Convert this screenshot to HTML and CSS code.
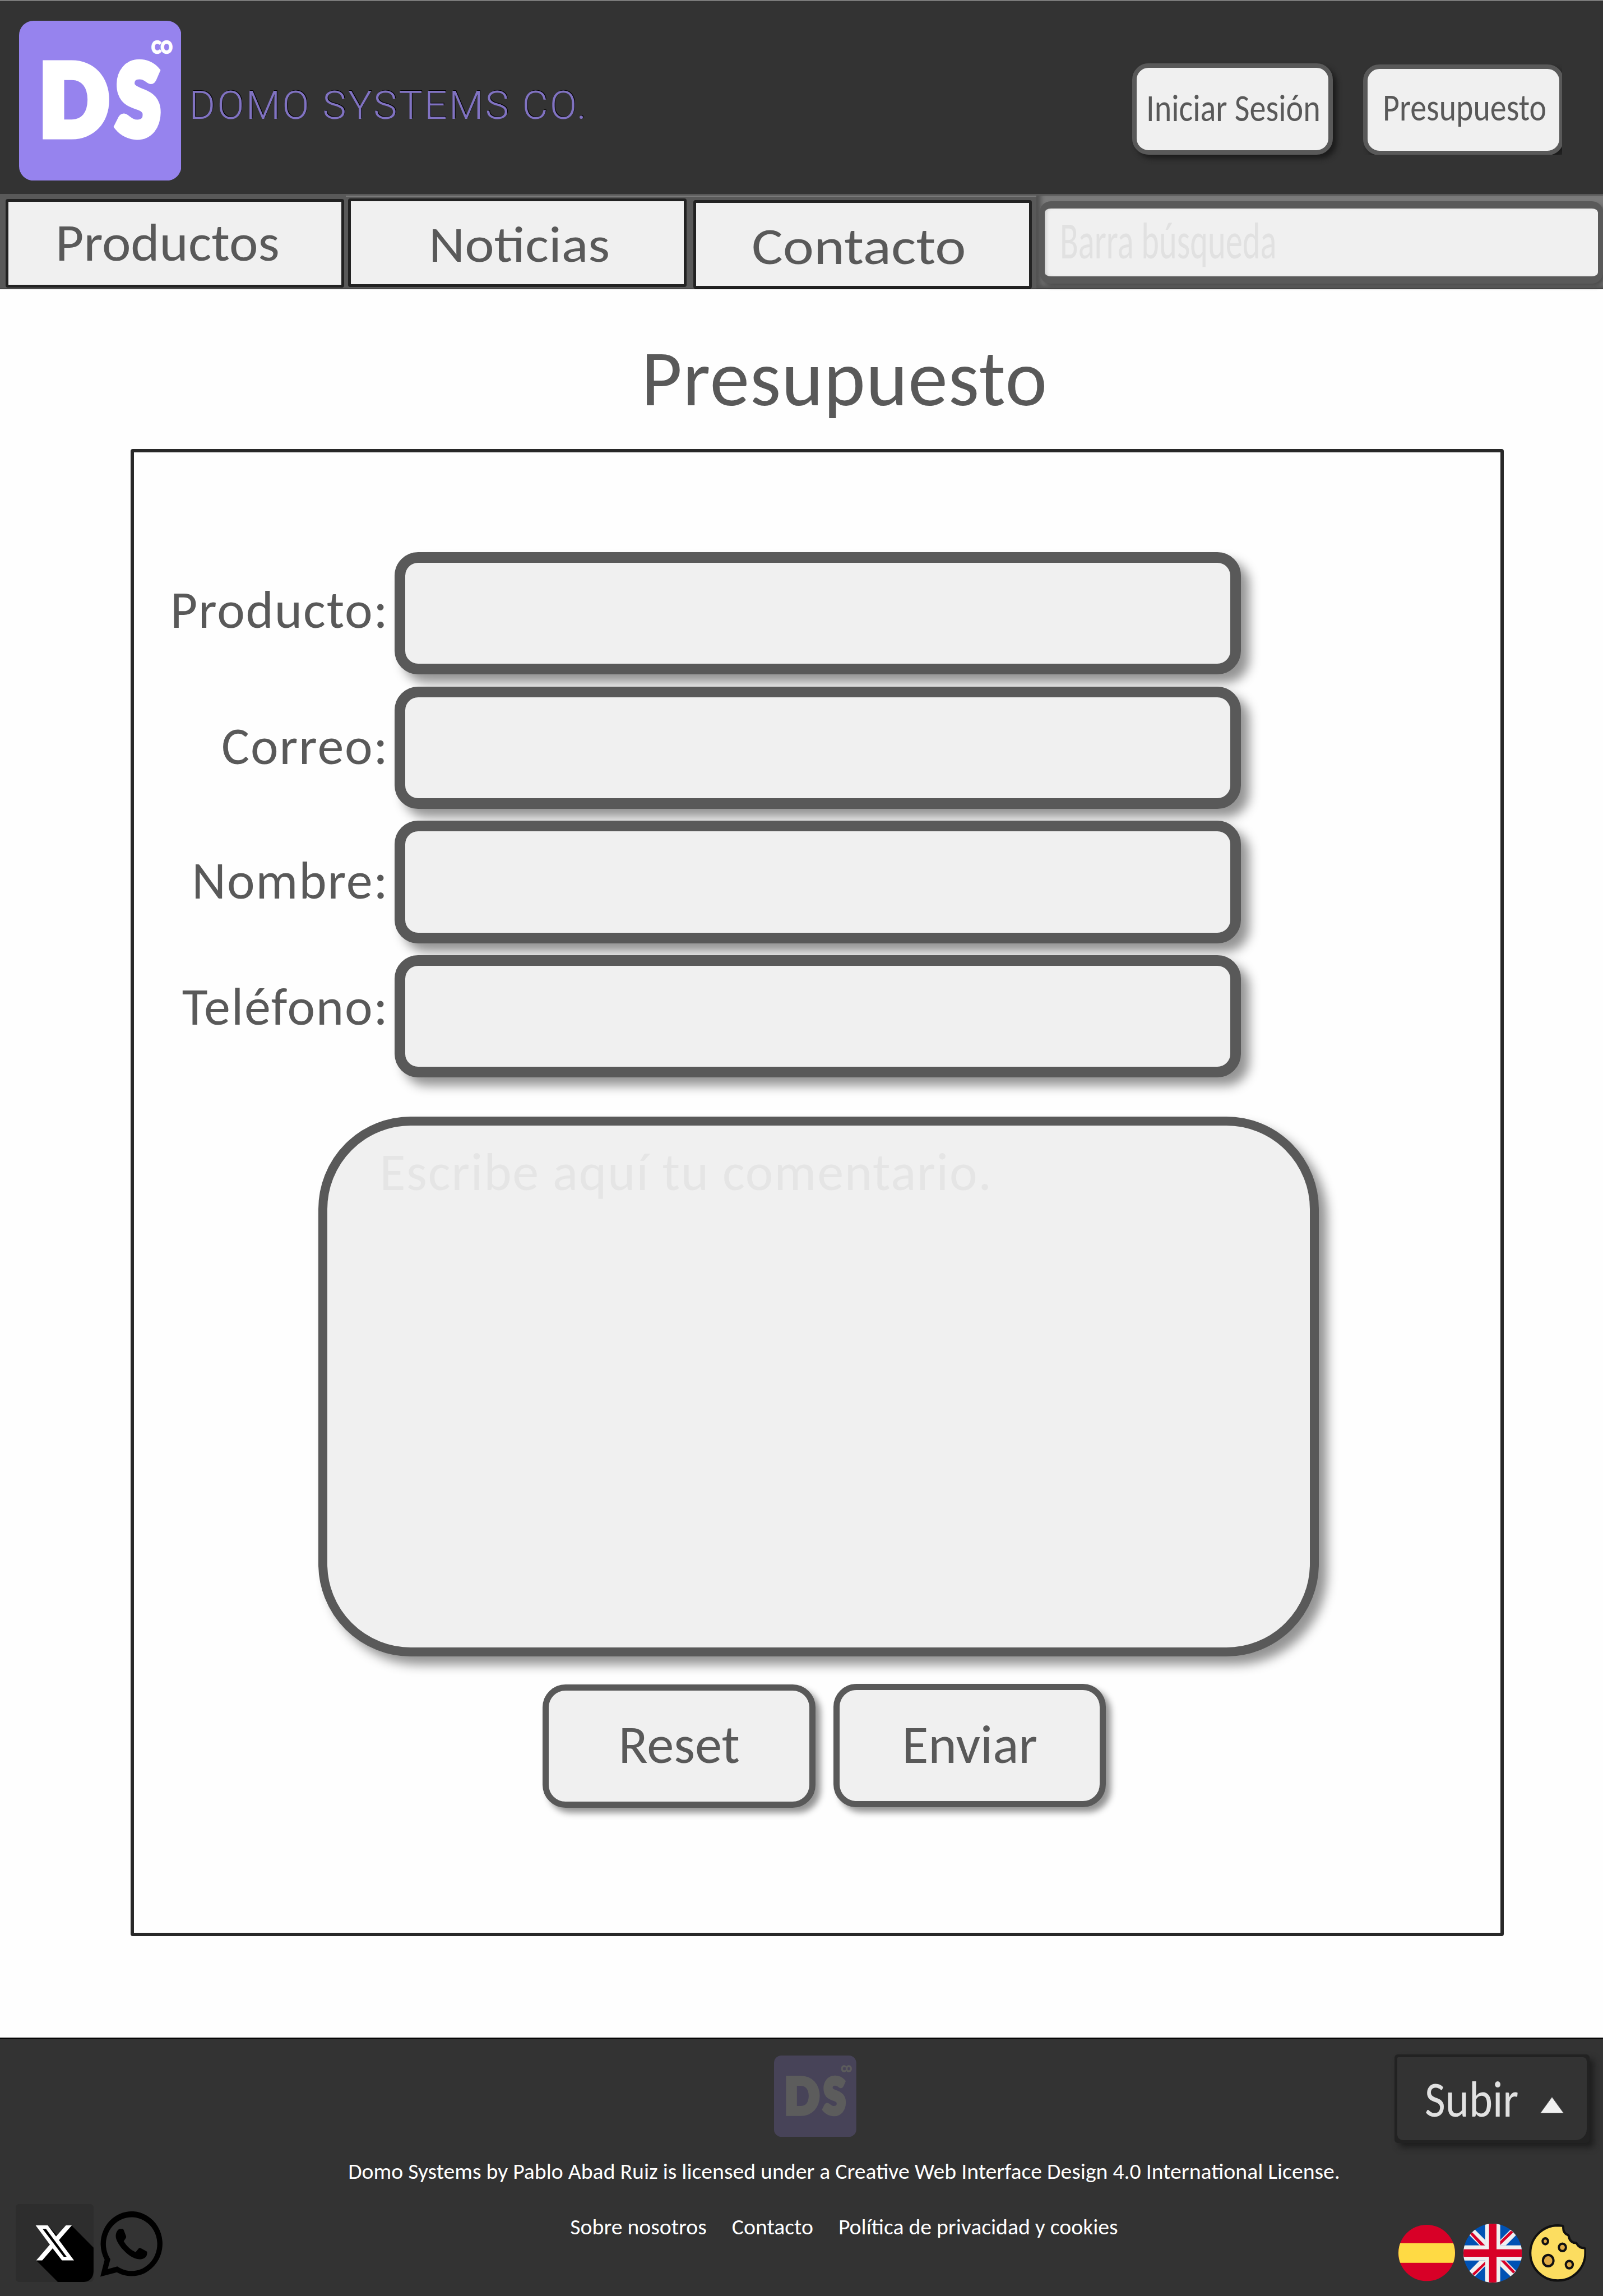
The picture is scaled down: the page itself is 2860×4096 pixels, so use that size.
FILE: index.html
```html
<!DOCTYPE html>
<html lang="es">
<head>
<meta charset="utf-8">
<title>Presupuesto - Domo Systems Co.</title>
<link rel="stylesheet" href="styles.css">
</head>
<body>
<header class="header">
  <svg class="header-logo" viewBox="77 87 1166 1149" preserveAspectRatio="none">
    <rect x="77" y="87" width="1166" height="1149" rx="104" fill="#9683ee"/>
    <text class="logo-ds" y="910"><tspan x="226" textLength="493" lengthAdjust="spacingAndGlyphs">D</tspan><tspan x="776" textLength="313" lengthAdjust="spacingAndGlyphs">S</tspan></text>
    <text class="logo-co" x="1029" y="320" textLength="150" lengthAdjust="spacingAndGlyphs">CO</text>
  </svg>
  <span class="brand">DOMO SYSTEMS CO.</span>
  <a class="hbtn hbtn-login"><span>Iniciar Sesión</span></a>
  <div class="hbtn-clip"><a class="hbtn hbtn-quote"><span>Presupuesto</span></a></div>
</header>

<nav class="nav">
  <div class="cell cell-products"><a class="tab"><span>Productos</span></a></div>
  <div class="cell cell-news"><a class="tab"><span>Noticias</span></a></div>
  <div class="cell cell-contact"><a class="tab"><span>Contacto</span></a></div>
  <div class="cell cell-search"><div class="search"><span>Barra búsqueda</span></div></div>
</nav>

<main class="main">
  <h1 class="title">Presupuesto</h1>
  <form class="form">
    <div class="rows">
      <div class="row"><label>Producto:</label><div class="field"></div></div>
      <div class="row"><label>Correo:</label><div class="field"></div></div>
      <div class="row"><label>Nombre:</label><div class="field"></div></div>
      <div class="row"><label>Teléfono:</label><div class="field"></div></div>
    </div>
    <div class="comment">Escribe aquí tu comentario.</div>
    <div class="actions">
      <a class="btn btn-reset">Reset</a>
      <a class="btn btn-send">Enviar</a>
    </div>
  </form>
</main>

<footer class="footer">
  <div class="social">
    <svg class="icon-x" viewBox="52 120 558 558">
      <rect x="52" y="120" width="558" height="558" rx="24" fill="#2d2d2d"/>
      <path d="M282 273L352 347L341 352ZM454 275L610 432V604Q606 672 542 678H354L199 524L297 410Z" fill="#000"/>
      <path d="M195 273H282L341 352L412 273H454L362 378L470 524H384L317 437L242 524H199L297 410Z" fill="#fff"/>
      <path d="M245 298H269L417 498H396Z" fill="#000"/>
    </svg>
    <svg class="icon-wa" viewBox="663 170 446 472" preserveAspectRatio="none">
      <path fill-rule="evenodd" d="M663 642L694 519A222 234 0 1 1 782 610ZM716 587L785 568A184.500 194 0 1 0 735 516Z"/>
      <path d="M800 297h22q6 0 9 8L848 350q2 8 -3 14L831 386C850 420 885 452 917 465L938 438q6 -6 13 -3L996 459q4 4 3 12C1000 500 975 516 945 516C900 514 855 480 820 440C795 410 774 375 774 350C774 325 785 305 800 297Z"/>
    </svg>
  </div>
  <div class="legal">
    <svg class="footer-logo" viewBox="77 87 1166 1149" preserveAspectRatio="none">
      <rect x="77" y="87" width="1166" height="1149" rx="104" fill="#9683ee"/>
      <text class="logo-ds" y="910"><tspan x="226" textLength="493" lengthAdjust="spacingAndGlyphs">D</tspan><tspan x="776" textLength="313" lengthAdjust="spacingAndGlyphs">S</tspan></text>
      <text class="logo-co" x="1029" y="320" textLength="150" lengthAdjust="spacingAndGlyphs">CO</text>
    </svg>
    <p class="license">Domo Systems by Pablo Abad Ruiz is licensed under a Creative Web Interface Design 4.0 International License.</p>
    <div class="links"><a>Sobre nosotros</a><a>Contacto</a><a>Política de privacidad y cookies</a></div>
  </div>
  <div class="tools">
    <a class="up"><div class="up-inner"><span>Subir</span><svg class="tri" viewBox="0 0 42 29"><path d="M21 0L42 29H0Z" fill="#f0f0f0" stroke="#555" stroke-width="1"/></svg></div></a>
    <div class="flags">
      <svg class="flag-es" viewBox="0 0 100 100" preserveAspectRatio="none">
        <clipPath id="c-es"><circle cx="50" cy="50" r="50"/></clipPath>
        <g clip-path="url(#c-es)"><rect width="100" height="100" fill="#d80027"/><rect y="32.600" width="100" height="34.800" fill="#ffda44"/></g>
      </svg>
      <svg class="flag-uk" viewBox="695 1145 366 345" preserveAspectRatio="none">
        <clipPath id="c-uk"><ellipse cx="878" cy="1317.500" rx="183" ry="172.500"/></clipPath>
        <g clip-path="url(#c-uk)">
          <rect x="695" y="1145" width="366" height="345" fill="#0052b4"/>
          <g fill="#f0f0f0">
            <path d="M768 1181L831 1240V1272H796L733 1213L700 1180ZM988 1181L925 1240V1272H960L1023 1213L1050 1180ZM733 1421L796 1361H831V1394L768 1452L720 1480ZM925 1361H960L1023 1421L1040 1480L988 1452L925 1394Z"/>
            <rect x="831" y="1145" width="94" height="345"/><rect x="695" y="1272" width="366" height="89"/>
          </g>
          <g fill="#d80027">
            <rect x="855" y="1145" width="47" height="345"/><rect x="695" y="1295" width="366" height="44"/>
            <path d="M750 1195L830 1272H803L738 1207ZM993 1185L1006 1197L925 1270V1248ZM831 1367V1386L762 1449L750 1438ZM928 1361H952L1018 1426L1006 1437Z"/>
          </g>
        </g>
      </svg>
      <svg class="cookie" viewBox="1104 1138 359 338" preserveAspectRatio="none">
        <path d="M1284 1145L1312 1147Q1320 1150 1318 1160C1318 1180 1330 1196 1345 1200Q1352 1203 1354 1213C1358 1235 1375 1248 1396 1247Q1402 1249 1406 1257C1416 1272 1430 1278 1448 1278Q1456 1279 1456 1288V1307A172 162 0 1 1 1284 1145Z" fill="#fcdd60" stroke="#111" stroke-width="14"/>
        <g fill="#e0ab45" stroke="#111" stroke-width="14"><circle cx="1206" cy="1238" r="17"/><circle cx="1313" cy="1274" r="22"/><circle cx="1224" cy="1352" r="33"/><circle cx="1356" cy="1375" r="22"/></g>
      </svg>
    </div>
  </div>
</footer>
</body>
</html>
```
FILE: styles.css
```css
* { box-sizing: border-box; }
body {
  margin: 0;
  width: 2860px;
  background: #fefefe;
  color: #595959;
  font-family: Carlito, Lato, sans-serif;
}
.logo-ds, .logo-co {
  font-family: Lato, sans-serif;
  font-weight: 900;
  fill: #fff;
  stroke: #fff;
}
.logo-ds { font-size: 697px; stroke-width: 60px; }
.logo-co { font-size: 120px; stroke-width: 10px; }

/* header */
.header {
  display: flex;
  align-items: flex-start;
  height: 345.5px;
  background: #333;
  border-top: 1px solid #aaa;
}
.header-logo { flex: none; width: 289.5px; height: 285.3px; margin: 35.5px 0 0 33.7px; }
.brand {
  flex: none;
  width: 1682.400px;
  margin: 145.400px 0 0 14.400px;
  font: 300 71px/84px Roboto, sans-serif;
  letter-spacing: 3.300px;
  color: #8173c2;
  text-shadow: 1px -1px 0 #000;
  white-space: nowrap;
}
.hbtn {
  flex: none;
  display: block;
  width: 358.500px;
  height: 162.200px;
  border: 8px solid #595959;
  border-radius: 29px;
  background: #f0f0f0;
  box-shadow: 7px 7px 10px #1c1c1c;
  line-height: 82px;
  white-space: nowrap;
}
.hbtn span, .tab span, .search span, .up span { display: inline-block; transform-origin: 0 0; }
.hbtn-login { margin-top: 112.400px; padding: 31.100px 0 0 17.500px; font-size: 67.400px; }
.hbtn-login span { transform: scaleX(.863); }
.hbtn-clip { flex: none; width: 355px; height: 161.400px; margin: 113.800px 0 0 53.300px; overflow: hidden; }
.hbtn-quote { padding: 28.500px 0 0 27.500px; font-size: 66.800px; }
.hbtn-quote span { transform: scaleX(.866); }

/* navigation */
.nav { display: flex; height: 169px; border-top: 3px solid #595959; background: #595959; }
.cell { flex: none; height: 166px; }
.cell-products { width: 617px; padding: 6.300px 0 0 9.600px; }
.cell-news { width: 612px; padding: 3px 0 0 3.500px; border-top: 2px solid #7b7b7b; }
.cell-contact { width: 620px; padding: 6.400px 0 0 8px; border-top: 2px solid #7b7b7b; }
.cell-search { width: 1011px; padding: 10.200px 0 0 6px; background: #7b7b7b; box-shadow: inset 8px -6px 8px #505050; }
.tab {
  display: block;
  width: 604px;
  height: 158px;
  border: 5px solid #222;
  border-radius: 4px;
  background: #f0f0f0;
  line-height: 112px;
  white-space: nowrap;
}
.cell-products .tab { padding: 14.500px 0 0 84.700px; font-size: 95.500px; line-height: 117px; }
.cell-products span { transform: scaleX(1.022); }
.cell-news .tab { padding: 21.200px 0 0 139.500px; font-size: 91px; }
.cell-news span { transform: scaleX(1.092); }
.cell-contact .tab { padding: 22.500px 0 0 98.600px; font-size: 92px; }
.cell-contact span { transform: scaleX(1.138); }
.search {
  width: 1005px;
  height: 147.800px;
  border: solid #595959;
  border-width: 13px 9px;
  border-radius: 20px;
  background: #f0f0f0;
  padding: 2.500px 0 0 26.700px;
  box-shadow: 4px 5px 7px #4c4c4c, inset 6px 0 6px -3px #ccc;
  font-size: 91.800px;
  line-height: 112px;
  color: #e1e1e1;
  white-space: nowrap;
}
.search span { transform: scaleX(.658); }

/* quote form */
.main { height: 3122.500px; border: solid #000; border-width: 1px 0 2px; padding-top: 72px; }
.title {
  margin: 0 0 39.500px;
  padding-left: 153px;
  font-size: 141.500px;
  font-weight: 400;
  line-height: 174px;
  letter-spacing: 1px;
  text-align: center;
}
.form {
  width: 2449.600px;
  height: 2652.500px;
  margin-left: 233px;
  padding-top: 178px;
  border: 6px solid #282828;
  border-radius: 4px;
}
.rows { display: flex; flex-direction: column; gap: 21.500px; }
.row { display: grid; grid-template-columns: 454.500px 1509.800px; column-gap: 10.400px; height: 218.200px; }
.row label { padding-top: 46.100px; font-size: 94px; line-height: 114px; letter-spacing: 1.850px; text-align: right; }
.row:nth-child(2) label, .row:nth-child(3) label { padding-top: 49.600px; }
.row:nth-child(4) label { padding-top: 35.300px; }
.field, .comment, .btn { background: #f0f0f0; box-shadow: 15px 15px 19px rgba(0, 0, 0, .42); }
.field { border: 19px solid #595959; border-radius: 42px; }
.comment {
  width: 1784.600px;
  height: 963.300px;
  margin: 69.700px 0 0 329.400px;
  padding: 26px 0 0 93px;
  border: 16px solid #595959;
  border-radius: 165px;
  font-size: 94px;
  line-height: 114px;
  letter-spacing: 1.800px;
  color: #e5e5e5;
}
.actions { display: flex; gap: 32px; margin: 48.300px 0 0 729px; }
.btn {
  width: 486.500px;
  height: 220px;
  border: 11px solid #595959;
  border-radius: 41px;
  box-shadow: 9px 9px 12px rgba(0, 0, 0, .42);
  font-size: 96.500px;
  line-height: 118px;
}
.btn-reset { margin-top: 1.400px; padding: 37.500px 0 0 124.500px; }
.btn-send { padding: 38.900px 0 0 111.700px; }

/* footer */
.footer {
  display: grid;
  grid-template-columns: 560px 1892px 408px;
  height: 459px;
  background: #333;
}
.social { display: flex; padding: 295px 0 0 27.800px; }
.icon-x { width: 138.900px; height: 138.900px; }
.icon-wa { width: 110.800px; height: 116.600px; margin: 13px 0 0 12.800px; }
.legal { padding-top: 30.300px; font-size: 39.720px; line-height: 48.400px; color: #fff; text-align: center; }
.footer-logo { display: block; width: 146.700px; height: 145.200px; margin-left: 821.300px; opacity: .2; }
.license { margin: 37.300px 0 51px; white-space: nowrap; }
.links { display: flex; justify-content: center; gap: 45px; }
.tools { padding: 28px 0 0 35.500px; }
.up {
  display: block;
  width: 348.500px;
  height: 158px;
  padding: 5.400px;
  border-radius: 6px;
  background: #222;
  box-shadow: 8px 8px 12px #1e1e1e;
}
.up-inner {
  display: flex;
  height: 147.200px;
  padding-left: 49px;
  border-radius: 2px 7px 20px 10px;
  background: #333;
  color: #e1e1e1;
  font-size: 90px;
  line-height: 110px;
}
.up span { width: 206.400px; padding-top: 19.600px; transform: scaleX(.89); }
.tri { width: 42px; height: 29px; margin-top: 71px; }
.flags { display: flex; align-items: center; margin: 144px 0 0 7.700px; }
.flag-es { width: 101px; height: 100.600px; }
.flag-uk { width: 104.400px; height: 105px; margin-left: 15.100px; }
.cookie { width: 102.400px; height: 102.600px; margin-left: 12.200px; }
```
